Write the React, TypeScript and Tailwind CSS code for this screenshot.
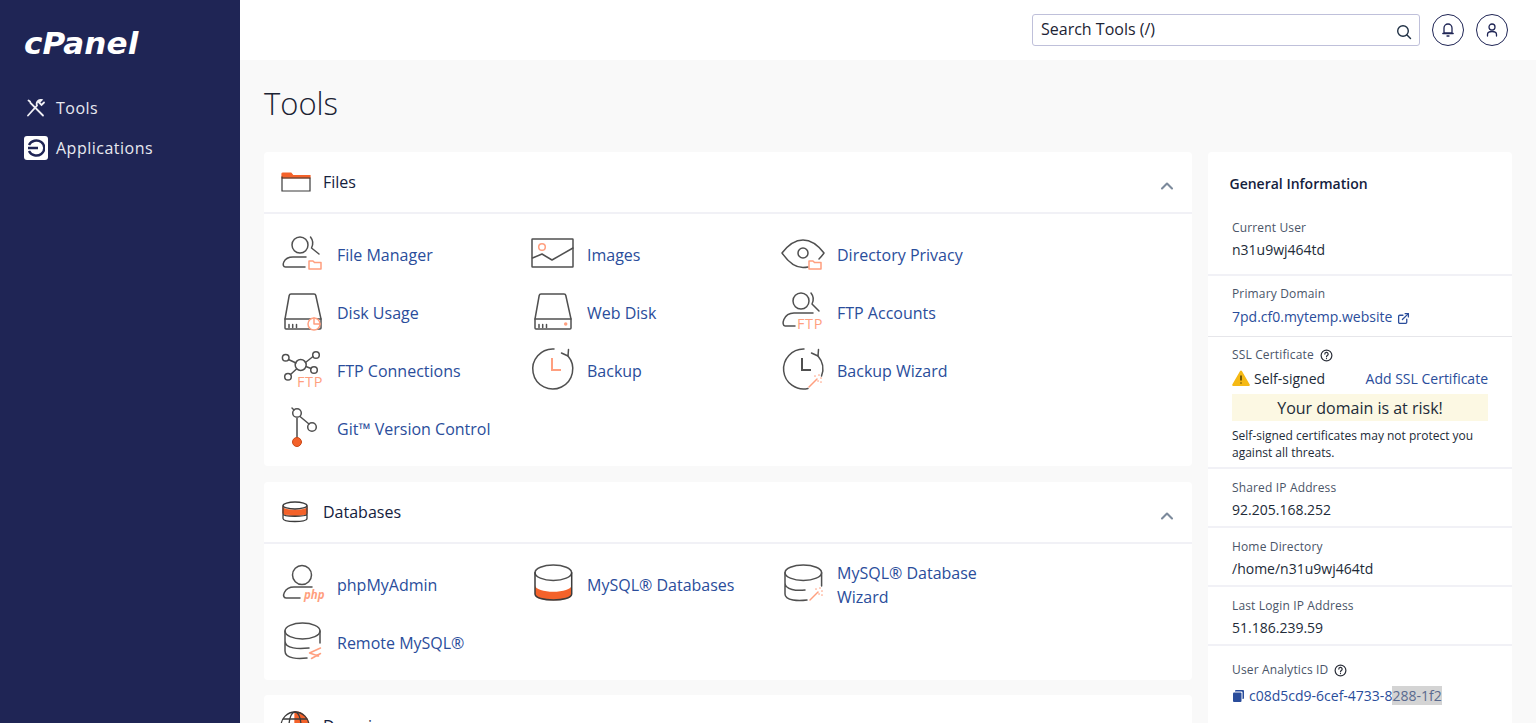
import type { ReactNode } from "react";
import { ChevronUp, ExternalLink } from "lucide-react";

const G = "#505050";
const O = "#ff9f7f";
const S = "#f4622a";

function Ico({ children }: { children: ReactNode }) {
  return (
    <svg width="46" height="40" viewBox="0 0 46 40" fill="none" stroke={G} strokeWidth="1.5" strokeLinecap="round" strokeLinejoin="round" className="overflow-visible">
      {children}
    </svg>
  );
}

const MiniFolder = ({ x, y }: { x: number; y: number }) => (
  <path d={`M${x} ${y}h4l1.500 1.500h6.500v6.500h-12z`} stroke={O} fill="#fff" />
);

const Wand = ({ x, y }: { x: number; y: number }) => (
  <g stroke={O}>
    <path d={`M${x} ${y + 12}l8 -8`} />
    <path d={`M${x + 6} ${y + 1}v.1M${x + 10} ${y}v.1M${x + 12} ${y + 3}v.1M${x + 9} ${y + 6}h.1M${x + 12} ${y + 7}v.1`} strokeWidth="1.6" />
  </g>
);

const FtpText = ({ x, y }: { x: number; y: number }) => (
  <text x={x} y={y} fontSize="14.5" fontFamily="'Open Sans', sans-serif" letterSpacing="0.6" fill={O} stroke="none">
    FTP
  </text>
);

const Disk = () => (
  <>
    <path d="M11 1h23q1.500 0 1.800 1.500L41 26v9q0 1 -1 1H6q-1 0 -1 -1v-9L9.200 2.500Q9.500 1 11 1z" />
    <path d="M5 26h36" />
    <path d="M9 31.500v3M12.700 31.500v3M16.500 31.500v3" />
  </>
);

const toolIcons: Record<string, ReactNode> = {
  manager: (
    <Ico>
      <circle cx="20" cy="10" r="8" />
      <path d="M30.500 2q4 5 1 11l7.500 6" />
      <path d="M26 22H13C3 22 1 32 5.500 32H25" />
      <MiniFolder x={29} y={26} />
    </Ico>
  ),
  images: (
    <Ico>
      <rect x="2" y="4" width="41" height="28" rx="0.5" />
      <path d="M2.500 23l9.500 -4 10 6 21 -12" />
      <circle cx="12" cy="12" r="3.300" stroke={O} />
    </Ico>
  ),
  privacy: (
    <Ico>
      <path d="M2 18Q12 5 23 5t21 13q-2 3 -5 6M28 32q-2 .5 -5 .5Q12 32.500 2 18" />
      <circle cx="23" cy="18" r="5" />
      <MiniFolder x={29} y={26} />
    </Ico>
  ),
  usage: (
    <Ico>
      <Disk />
      <circle cx="34" cy="31" r="6" fill="#fff" stroke={O} />
      <path d="M34 25v6h6" stroke={O} />
    </Ico>
  ),
  webdisk: (
    <Ico>
      <Disk />
      <circle cx="35.700" cy="31" r="1" stroke={O} fill={O} />
    </Ico>
  ),
  ftpacc: (
    <Ico>
      <circle cx="21" cy="8" r="8" />
      <path d="M31 0q4 5 1 11l7 7" />
      <path d="M33 20H14C3 20 1 33 5 33h10" />
      <FtpText x={17} y={36} />
    </Ico>
  ),
  ftpconn: (
    <Ico>
      <circle cx="20.700" cy="14" r="5.500" />
      <circle cx="5.700" cy="6.700" r="3.300" />
      <circle cx="36" cy="4" r="3.300" />
      <circle cx="8" cy="25.700" r="3.300" />
      <circle cx="34" cy="19" r="3.300" />
      <path d="M8.500 8.500l7.500 3.500M25.500 11.500l7.500 -6M16.500 18l-6 5.500M26 15.500l5 2" />
      <FtpText x={17} y={36} />
    </Ico>
  ),
  backup: (
    <Ico>
      <path d="M24 -2A20 20 0 1 0 38 5" />
      <path d="M31.500 2l6.500 3 .5 -6.500" />
      <path d="M22 7v12h9" stroke={O} strokeWidth="2" strokeLinejoin="miter" strokeLinecap="butt" />
    </Ico>
  ),
  wizard: (
    <Ico>
      <path d="M24 -2A20 20 0 1 0 28 37.500M41.500 25A20 20 0 0 0 38 5" />
      <path d="M31.500 2l6.500 3 .5 -6.500" />
      <path d="M22 7v12h9" strokeWidth="2" strokeLinejoin="miter" strokeLinecap="butt" />
      <Wand x={29} y={24} />
    </Ico>
  ),
  git: (
    <Ico>
      <path d="M12 -1l2 2" />
      <circle cx="17" cy="4" r="4.300" />
      <circle cx="32" cy="18" r="4.300" />
      <path d="M20 7.500l9 7.500" />
      <path d="M17 8.500v20" stroke="#777" strokeWidth="2" />
      <circle cx="17" cy="33" r="4.500" fill={S} stroke="#c94a1a" strokeWidth="1" />
    </Ico>
  ),
  php: (
    <Ico>
      <circle cx="22" cy="10" r="9.500" />
      <path d="M32 22H14C4 22 1 33 6 33h14" />
      <text x="24" y="33.500" fontSize="11.500" fontWeight="700" fontStyle="italic" fontFamily="'Open Sans', sans-serif" fill={O} stroke="none">
        php
      </text>
    </Ico>
  ),
  mysql: (
    <Ico>
      <path d="M5 20c0 9 36.700 9 36.700 0v10c0 7 -36.700 7 -36.700 0z" fill={S} stroke="none" />
      <ellipse cx="23.300" cy="7.700" rx="18.300" ry="7.700" />
      <path d="M5 7.700V29c0 8 36.700 8 36.700 0V7.700" stroke="#3c3c3c" />
    </Ico>
  ),
  mysqlwiz: (
    <Ico>
      <ellipse cx="23.300" cy="7.700" rx="18.300" ry="7.700" />
      <path d="M5 7.700V29c0 7 14 7 22 6M41.600 7.700V21M5 18c0 7 12 8 20 7" />
      <Wand x={30} y={23} />
    </Ico>
  ),
  remote: (
    <Ico>
      <ellipse cx="22.500" cy="8" rx="17.500" ry="8" />
      <path d="M5 8v20c0 8 14 8 22 7M40 8v12M5 18c0 8 14 8 24 7" />
      <path d="M40.500 25l-11 5 9 3M40.500 30.500l-9 5" stroke={O} />
    </Ico>
  ),
};

type Tool = { icon: string; label: string };

const files: Tool[] = [
  { icon: "manager", label: "File Manager" },
  { icon: "images", label: "Images" },
  { icon: "privacy", label: "Directory Privacy" },
  { icon: "usage", label: "Disk Usage" },
  { icon: "webdisk", label: "Web Disk" },
  { icon: "ftpacc", label: "FTP Accounts" },
  { icon: "ftpconn", label: "FTP Connections" },
  { icon: "backup", label: "Backup" },
  { icon: "wizard", label: "Backup Wizard" },
  { icon: "git", label: "Git™ Version Control" },
];

const databases: Tool[] = [
  { icon: "php", label: "phpMyAdmin" },
  { icon: "mysql", label: "MySQL® Databases" },
  { icon: "mysqlwiz", label: "MySQL® Database Wizard" },
  { icon: "remote", label: "Remote MySQL®" },
];

function Section({ title, icon, tools }: { title: string; icon: ReactNode; tools: Tool[] }) {
  return (
    <section className="mb-4 rounded bg-white">
      <div className="flex h-[62px] items-center border-b-2 border-[#f1f1f6] pl-4 pr-[15px]">
        <span className="flex w-[43px] items-center">{icon}</span>
        <h2 className="text-base text-[#14213d]">{title}</h2>
        <ChevronUp className="ml-auto mt-2 text-[#7c8a9c]" size={20} strokeWidth={2.5} />
      </div>
      <div className="grid grid-cols-[250px_250px_250px] px-4 pb-2 pt-3">
        {tools.map((t) => (
          <div key={t.label} className="flex h-[58px] items-center">
            <span className="flex w-[57px] shrink-0 items-center">{toolIcons[t.icon]}</span>
            <a className="max-w-[170px] leading-6 text-[#2a4d9b]">{t.label}</a>
          </div>
        ))}
      </div>
    </section>
  );
}

function Help() {
  return (
    <svg width="13" height="13" viewBox="0 0 14 14" fill="none" stroke="#2b2f3a" strokeWidth="1.300" strokeLinecap="round">
      <circle cx="7" cy="7" r="5.800" />
      <path d="M5.200 5.500a1.800 1.800 0 1 1 2.600 1.600c-.6.300-.8.600-.8 1.200" />
      <path d="M7 10.200v.1" />
    </svg>
  );
}

const labelCls = "text-xs font-medium tracking-[0.15px] text-[#4a5568]";

function Info({ label, children }: { label: string; children: ReactNode }) {
  return (
    <div className="h-[59px] border-b-2 border-[#f1f1f6] px-6 pt-[11px]">
      <div className={labelCls}>{label}</div>
      <div className="mt-1 text-sm text-[#222b38]">{children}</div>
    </div>
  );
}

export default function App() {
  return (
    <div className="flex h-screen overflow-hidden bg-[#f9f9f9] font-['Open_Sans',sans-serif]">
      <aside className="w-[240px] shrink-0 bg-[#1f2555] pl-6 text-[#e8e9f0]">
        <div className="flex h-[88px] items-center">
          <span className="pb-[2px] font-['DejaVu_Sans',sans-serif] text-[31px] font-bold italic leading-none tracking-[0.1px] text-white">cPanel</span>
        </div>
        <nav className="flex flex-col">
          <div className="flex h-10 items-center tracking-[0.5px]">
            <span className="flex w-8 items-center pl-[3px]">
              <svg width="18" height="18" viewBox="0 0 18 18" fill="none" stroke="#f0f0f5" strokeWidth="1.800" strokeLinecap="round">
                <path d="M1.500 1.500l1.500 1 .5 1.500L16 16.500" />
                <path d="M17 3.500l-2.500 2.500-2.500-2.500L14.500 1a4 4 0 0 0-4.500 5.500L1 16.500" />
              </svg>
            </span>
            <span>Tools</span>
          </div>
          <div className="flex h-10 items-center tracking-[0.5px]">
            <span className="mr-2 flex h-6 w-6 items-center justify-center rounded-[3px] bg-white">
              <svg width="18" height="18" viewBox="0 0 18 18" fill="none" stroke="#1f2555" strokeWidth="2.400">
                <path d="M2 6a8 7.500 0 1 1 0 6M1 9h10" />
              </svg>
            </span>
            <span>Applications</span>
          </div>
        </nav>
      </aside>

      <div className="flex min-w-0 grow flex-col">
        <header className="flex h-[60px] shrink-0 items-center justify-end bg-white pr-[28px]">
          <div className="flex h-8 w-[388px] items-center justify-between rounded-[3px] border border-[#bfc0da] pl-2 pr-[7px] text-[#1c2333]">
            <span className="pb-[3px]">Search Tools (/)</span>
            <svg width="16" height="16" viewBox="0 0 16 16" fill="none" stroke="#1f3044" strokeWidth="1.400" strokeLinecap="round" className="mt-[4px]">
              <circle cx="7" cy="7" r="5.300" />
              <path d="M11 11l3.500 3.500" />
            </svg>
          </div>
          <span className="ml-3 flex h-8 w-8 items-center justify-center rounded-full border border-[#1f2555]">
            <svg width="16" height="16" viewBox="0 0 16 16" fill="none" stroke="#1f2555" strokeWidth="1.300" strokeLinecap="round">
              <path d="M8 2a4 4 0 0 0 -4 4v5H12V6a4 4 0 0 0 -4-4zM2.800 11.500h10.400M7 14h2" />
            </svg>
          </span>
          <span className="ml-[12px] flex h-8 w-8 items-center justify-center rounded-full border border-[#1f2555]">
            <svg width="16" height="16" viewBox="0 0 16 16" fill="none" stroke="#1f2555" strokeWidth="1.300" strokeLinecap="round">
              <circle cx="8" cy="5" r="3" />
              <path d="M3.500 14v-1.500c0-2 2-3 4.500-3s4.500 1 4.500 3V14" />
            </svg>
          </span>
        </header>

        <main className="min-h-0 grow overflow-hidden px-6">
          <h1 className="flex h-[92px] items-center pb-[6px] text-[31px] font-light text-[#1c2333]">Tools</h1>
          <div className="flex items-start gap-4">
            <div className="min-w-0 grow">
              <Section
                title="Files"
                tools={files}
                icon={
                  <svg width="30" height="22" viewBox="0 0 30 22" fill="none" stroke="#3b3b3b" strokeWidth="1.200" className="ml-px">
                    <path d="M1 3q0-1 1-1h8l2 2.500H29V7H1z" fill={S} stroke={S} />
                    <path d="M1 5.500V20h28V7H1" />
                  </svg>
                }
              />
              <Section
                title="Databases"
                tools={databases}
                icon={
                  <svg width="26" height="24" viewBox="0 0 26 24" fill="none" stroke="#3b3b3b" strokeWidth="1.300" className="ml-[2px]">
                    <path d="M1 8v5c0 3 24 3 24 0V8c-3 3-21 3-24 0z" fill={S} stroke={S} />
                    <ellipse cx="13" cy="5.500" rx="12" ry="3.500" />
                    <path d="M1 5.500v13c0 4 24 4 24 0v-13M1 14c0 3 24 3 24 0" />
                  </svg>
                }
              />
              <section className="-mt-px rounded bg-white">
                <div className="flex h-[62px] items-center pl-4">
                  <svg width="30" height="30" viewBox="0 0 30 30" fill="none" stroke="#3b3b3b" strokeWidth="1.300" className="mr-[13px]">
                    <path d="M15 1a14 14 0 0 1 14 14H15z" fill={S} stroke={S} />
                    <circle cx="15" cy="15" r="14" />
                    <ellipse cx="15" cy="15" rx="6" ry="14" />
                    <path d="M1 15h28M3 8h24M3 22h24" />
                  </svg>
                  <h2 className="text-base text-[#14213d]">Domains</h2>
                </div>
              </section>
            </div>

            <aside className="w-[304px] shrink-0 rounded bg-white pb-10">
              <h3 className="px-[21.500px] pb-[26px] pt-[22px] text-sm font-semibold leading-[19px] text-[#14213d]">General Information</h3>
              <div className="h-[57px] border-b-2 border-[#f1f1f6] px-6 pt-px">
                <div className={labelCls}>Current User</div>
                <div className="mt-1 text-sm text-[#222b38]">n31u9wj464td</div>
              </div>
              <div className="h-[61px] border-b border-[#e6e6ea] px-6 pt-[10px]">
                <div className={labelCls}>Primary Domain</div>
                <a className="mt-[5px] flex items-center gap-[5px] text-sm text-[#2a4d9b]">
                  7pd.cf0.mytemp.website
                  <ExternalLink size={13} strokeWidth={2.400} className="mt-[2px]" />
                </a>
              </div>
              <div className="h-[132px] border-b-2 border-[#f1f1f6] px-6 pt-[10px]">
                <div className={`flex items-center gap-[6px] ${labelCls}`}>
                  SSL Certificate <Help />
                </div>
                <div className="mt-1 flex h-[24px] items-center text-sm text-[#222b38]">
                  <svg width="18" height="16" viewBox="0 0 18 16" className="mb-[3px] mr-[4px]">
                    <path d="M9 .5a1 1 0 0 1 .9.5l7.800 13.500a1 1 0 0 1-.9 1.500H1.200a1 1 0 0 1-.9-1.500L8.100 1A1 1 0 0 1 9 .5z" fill="#f5b915" />
                    <path d="M9 5.500v5M9 12.500v1" stroke="#4a3a00" strokeWidth="1.500" />
                  </svg>
                  Self-signed
                  <a className="ml-auto text-[#2a4d9b]">Add SSL Certificate</a>
                </div>
                <div className="mt-[3px] flex h-[27px] items-center justify-center bg-[#fcf8e3] text-base text-[#222b38]">Your domain is at risk!</div>
                <p className="mt-[6px] text-xs leading-[17px] text-[#222b38]">Self-signed certificates may not protect you against all threats.</p>
              </div>
              <Info label="Shared IP Address">92.205.168.252</Info>
              <Info label="Home Directory">/home/n31u9wj464td</Info>
              <Info label="Last Login IP Address">51.186.239.59</Info>
              <div className="px-6 pt-4">
                <div className={`flex items-center gap-[6px] ${labelCls}`}>
                  User Analytics ID <Help />
                </div>
                <div className="mt-[8px] flex items-center gap-[5px] text-sm text-[#2a4d9b]">
                  <svg width="12" height="12" viewBox="0 0 12 12" fill="#2a4d9b">
                    <path d="M4 0h7a1 1 0 0 1 1 1v7a1 1 0 0 1-1 1h-.5V2.500a1 1 0 0 0-1-1H3V1a1 1 0 0 1 1-1z" />
                    <rect x="1" y="2.500" width="8.500" height="9.500" rx="1" />
                  </svg>
                  <span>
                    c08d5cd9-6cef-4733-8<span className="bg-[#d4d4d4] text-[#5a6a8e]">288-1f2</span>
                  </span>
                </div>
              </div>
            </aside>
          </div>
        </main>
      </div>
    </div>
  );
}
